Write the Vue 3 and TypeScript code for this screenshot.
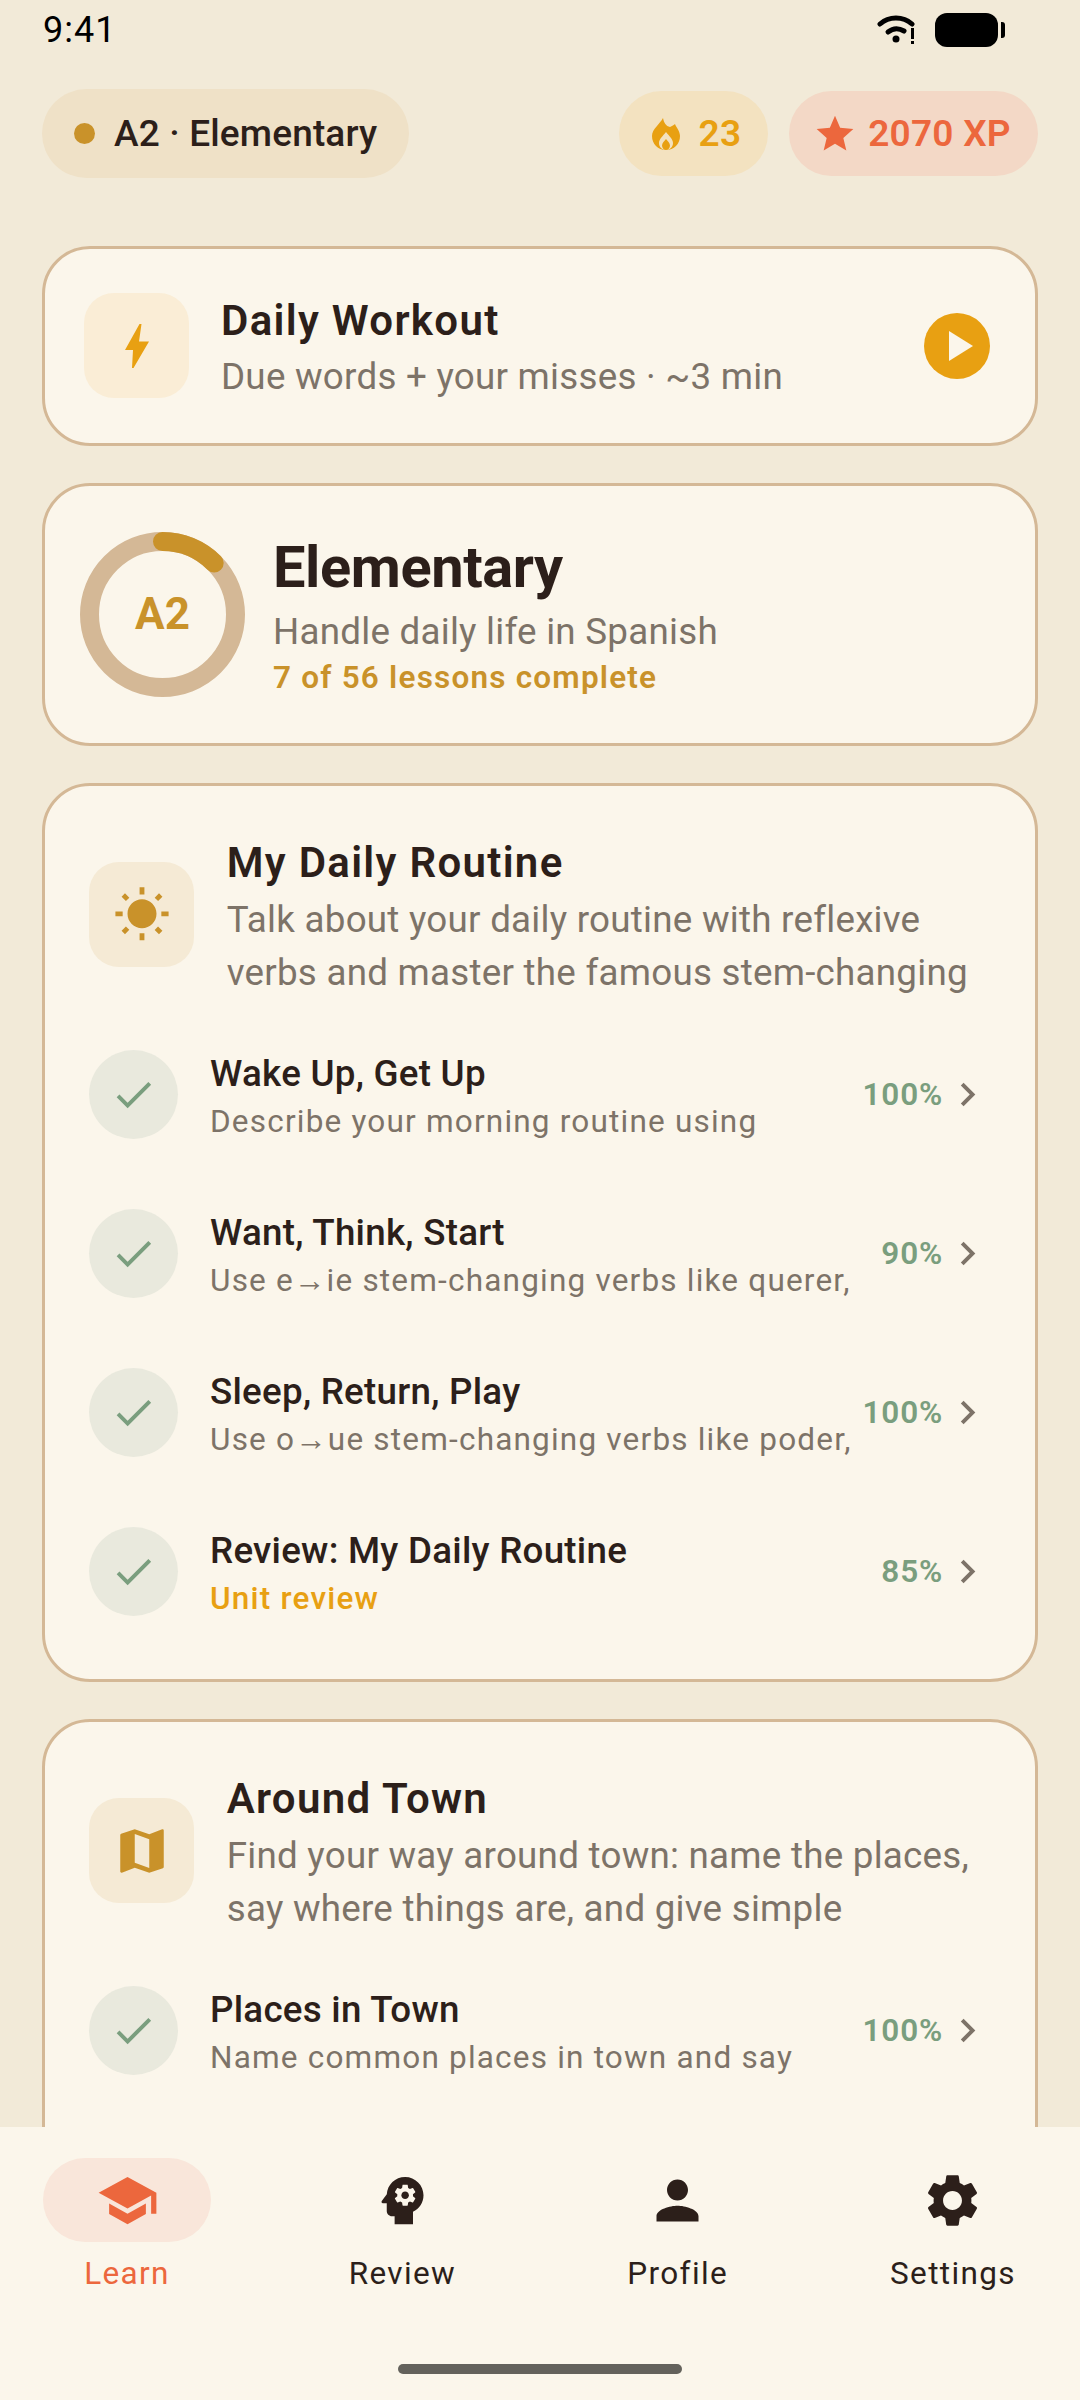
<script setup lang="ts">
interface Lesson {
  title: string
  sub: string
  pct: string
  review?: boolean
}

interface Unit {
  title: string
  desc: string[]
  icon: string
  lessons: Lesson[]
}

const sunPath =
  'M6.76 4.84l-1.8-1.79-1.41 1.41 1.79 1.79 1.42-1.41zM4 10.5H1v2h3v-2zm9-9.95h-2V3.5h2V.55zm7.45 3.91l-1.41-1.41-1.79 1.79 1.41 1.41 1.79-1.79zm-3.21 13.7l1.79 1.8 1.41-1.41-1.8-1.79-1.4 1.4zM20 10.5v2h3v-2h-3zm-8-5c-3.31 0-6 2.69-6 6s2.69 6 6 6 6-2.69 6-6-2.69-6-6-6zm-1 16.95h2V19.5h-2v2.95zm-7.45-3.91l1.41 1.41 1.79-1.8-1.41-1.41-1.79 1.8z'
const mapPath =
  'M20.5 3l-.16.03L15 5.1 9 3 3.36 4.9c-.21.07-.36.25-.36.48V20.5c0 .28.22.5.5.5l.16-.03L9 18.9l6 2.1 5.64-1.9c.21-.07.36-.25.36-.48V3.5c0-.28-.22-.5-.5-.5zM15 19l-6-2.11V5l6 2.11V19z'

const units: Unit[] = [
  {
    title: 'My Daily Routine',
    desc: ['Talk about your daily routine with reflexive', 'verbs and master the famous stem-changing'],
    icon: sunPath,
    lessons: [
      { title: 'Wake Up, Get Up', sub: 'Describe your morning routine using', pct: '100%' },
      { title: 'Want, Think, Start', sub: 'Use e→ie stem-changing verbs like querer,', pct: '90%' },
      { title: 'Sleep, Return, Play', sub: 'Use o→ue stem-changing verbs like poder,', pct: '100%' },
      { title: 'Review: My Daily Routine', sub: 'Unit review', pct: '85%', review: true },
    ],
  },
  {
    title: 'Around Town',
    desc: ['Find your way around town: name the places,', 'say where things are, and give simple'],
    icon: mapPath,
    lessons: [{ title: 'Places in Town', sub: 'Name common places in town and say', pct: '100%' }],
  },
]

const navItems = [
  {
    label: 'Learn',
    active: true,
    paths: ['M5 13.18v4L12 21l7-3.82v-4L12 17l-7-3.82zM12 3L1 9l11 6 9-4.91V17h2V9L12 3z'],
  },
  {
    label: 'Review',
    active: false,
    paths: [
      'M13 8.57c-.79 0-1.43.64-1.43 1.43s.64 1.43 1.43 1.43 1.43-.64 1.43-1.43-.64-1.43-1.43-1.43z',
      'M13 3C9.25 3 6.2 5.94 6.02 9.64L4.1 12.2c-.25.33-.01.8.4.8H6v3c0 1.1.9 2 2 2h1v3h7v-4.68c2.36-1.12 4-3.53 4-6.32 0-3.87-3.13-7-7-7zm3 7c0 .13-.01.26-.03.39l.83.66c.08.06.1.16.05.25l-.8 1.39c-.05.09-.16.12-.24.09l-.99-.4c-.21.16-.43.29-.67.39L14 13.83c-.01.1-.1.17-.2.17h-1.6c-.1 0-.18-.07-.2-.17l-.15-1.06c-.25-.1-.47-.23-.68-.39l-.99.4c-.09.03-.2 0-.25-.09l-.8-1.39c-.05-.08-.03-.19.05-.25l.84-.66c-.01-.13-.02-.26-.02-.39s.02-.27.04-.39l-.85-.66c-.08-.06-.1-.16-.05-.26l.8-1.38c.05-.09.15-.12.24-.09l1 .4c.2-.15.43-.29.67-.39L12 6.17c.02-.1.1-.17.2-.17h1.6c.1 0 .18.07.2.17l.15 1.06c.24.1.46.23.67.39l1-.4c.09-.03.2 0 .24.09l.8 1.38c.05.09.03.2-.05.26l-.85.66c.03.12.04.25.04.39z',
    ],
  },
  {
    label: 'Profile',
    active: false,
    paths: ['M12 12c2.21 0 4-1.79 4-4s-1.79-4-4-4-4 1.79-4 4 1.79 4 4 4zm0 2c-2.67 0-8 1.34-8 4v2h16v-2c0-2.66-5.33-4-8-4z'],
  },
  {
    label: 'Settings',
    active: false,
    paths: [
      'M19.14 12.94c.04-.3.06-.61.06-.94 0-.32-.02-.64-.07-.94l2.03-1.58c.18-.14.23-.41.12-.61l-1.92-3.32c-.12-.22-.37-.29-.59-.22l-2.39.96c-.5-.38-1.03-.7-1.62-.94l-.36-2.54c-.04-.24-.24-.41-.48-.41h-3.84c-.24 0-.43.17-.47.41l-.36 2.54c-.59.24-1.13.57-1.62.94l-2.39-.96c-.22-.08-.47 0-.59.22L2.74 8.87c-.12.21-.08.47.12.61l2.03 1.58c-.05.3-.09.63-.09.94s.02.64.07.94l-2.03 1.58c-.18.14-.23.41-.12.61l1.92 3.32c.12.22.37.29.59.22l2.39-.96c.5.38 1.03.7 1.62.94l.36 2.54c.05.24.24.41.48.41h3.84c.24 0 .44-.17.47-.41l.36-2.54c.59-.24 1.13-.56 1.62-.94l2.39.96c.22.08.47 0 .59-.22l1.92-3.32c.12-.22.07-.47-.12-.61l-2.01-1.58zM12 15.6c-1.98 0-3.6-1.62-3.6-3.6s1.62-3.6 3.6-3.6 3.6 1.62 3.6 3.6-1.62 3.6-3.6 3.6z',
    ],
  },
]

// ring is r=73 in a 165 box, 7 of 56 lessons done
const ringLen = 2 * Math.PI * 73
const ringDash = `${ringLen * 0.125} ${ringLen}`
</script>

<template>
  <div class="screen">
    <div class="status">
      <span class="clock">9:41</span>
      <svg class="wifi" width="40" height="32" viewBox="0 0 40 32">
        <path d="M3 10C12 2 26 2 35 10" fill="none" stroke="#000" stroke-width="5" stroke-linecap="round" />
        <path d="M11 18C16 14 22 14 27 17" fill="none" stroke="#000" stroke-width="5" stroke-linecap="round" />
        <circle cx="19" cy="25" r="3.5" fill="#000" />
        <rect x="34" y="14" width="3" height="11" fill="#000" />
        <rect x="34" y="27" width="3" height="3" fill="#000" />
      </svg>
      <div class="battery"></div>
      <div class="battery-nub"></div>
    </div>

    <div class="content">
      <div class="top">
        <div class="level-pill">
          <span class="dot"></span>
          <span>A2 · Elementary</span>
        </div>
        <div class="spacer"></div>
        <div class="chip chip-streak">
          <svg width="28" height="32" viewBox="0 0 28 32">
            <path d="M11 0C12 5 14 8 18 9C20 8 22 7 23 6C24 9 28 13 28 18C28 26 22 32 14 32C6 32 0 26 0 18C0 11 8 6 11 0Z" fill="#E8A012" />
            <path d="M14 14C17 18 21 21 21 25C21 29 18 32 14 32C10 32 7 29 7 25C7 21 11 18 14 14Z" fill="#F3E2C0" />
            <path d="M14 21C15.5 23 18 25 18 27.5C18 30 16 32 14 32C12 32 10 30 10 27.5C10 25 12.5 23 14 21Z" fill="#E8A012" />
          </svg>
          <span>23</span>
        </div>
        <div class="chip chip-xp">
          <svg width="44" height="44" viewBox="0 0 24 24" fill="#EC673D">
            <path d="M12 17.27L18.18 21l-1.64-6.81L22 9.24l-7.19-.61L12 2 9.19 8.63 2 9.24l5.46 4.95L5.82 21z" />
          </svg>
          <span>2070 XP</span>
        </div>
      </div>

      <div class="card workout">
        <div class="workout-icon">
          <svg width="24" height="44" viewBox="0 0 24 44" fill="#E8A012">
            <path d="M14.5 0H16.5L14 17.5H24L8.5 44H7L8 26H0Z" />
          </svg>
        </div>
        <div class="workout-text">
          <div class="workout-title">Daily Workout</div>
          <div class="workout-sub">Due words + your misses · ~3 min</div>
        </div>
        <svg class="play" width="66" height="66" viewBox="0 0 66 66">
          <circle cx="33" cy="33" r="33" fill="#E8A012" />
          <path d="M25 18V48L49 33Z" fill="#FBF6EB" />
        </svg>
      </div>

      <div class="card level">
        <svg class="ring" width="165" height="165" viewBox="0 0 165 165">
          <circle cx="82.5" cy="82.5" r="73" fill="none" stroke="#D4B896" stroke-width="19" />
          <circle
            cx="82.5"
            cy="82.5"
            r="73"
            fill="none"
            stroke="#C9922A"
            stroke-width="19"
            stroke-linecap="round"
            :stroke-dasharray="ringDash"
            transform="rotate(-90 82.5 82.5)"
          />
          <text x="82.5" y="97" text-anchor="middle" class="ring-text">A2</text>
        </svg>
        <div class="level-text">
          <div class="level-title">Elementary</div>
          <div class="level-sub">Handle daily life in Spanish</div>
          <div class="level-count">7 of 56 lessons complete</div>
        </div>
      </div>

      <div v-for="unit in units" :key="unit.title" class="card unit">
        <div class="unit-head">
          <div class="unit-icon">
            <svg width="58" height="58" viewBox="0 0 24 24" fill="#C9922A"><path :d="unit.icon" /></svg>
          </div>
          <div class="unit-text">
            <div class="unit-title">{{ unit.title }}</div>
            <div v-for="line in unit.desc" :key="line" class="unit-desc">{{ line }}</div>
          </div>
        </div>
        <div v-for="lesson in unit.lessons" :key="lesson.title" class="row">
          <div class="check">
            <svg width="47" height="47" viewBox="0 0 24 24" fill="#7A9E7E">
              <path d="M9 16.17L4.83 12l-1.42 1.41L9 19 21 7l-1.41-1.41z" />
            </svg>
          </div>
          <div class="row-text">
            <div class="row-title">{{ lesson.title }}</div>
            <div class="row-sub" :class="{ 'row-review': lesson.review }">{{ lesson.sub }}</div>
          </div>
          <span class="pct">{{ lesson.pct }}</span>
          <svg class="chev" width="47" height="47" viewBox="0 0 24 24" fill="#7D7368">
            <path d="M10 6L8.59 7.41 13.17 12l-4.58 4.59L10 18l6-6z" />
          </svg>
        </div>
      </div>
    </div>

    <div class="nav">
      <div class="nav-row">
        <div v-for="item in navItems" :key="item.label" class="nav-item" :class="{ active: item.active }">
          <div class="nav-pill">
            <svg width="63" height="63" viewBox="0 0 24 24" :fill="item.active ? '#EC673D' : '#2C1F1A'">
              <path v-for="p in item.paths" :key="p" :d="p" />
            </svg>
          </div>
          <span class="nav-label">{{ item.label }}</span>
        </div>
      </div>
      <div class="home-bar"></div>
    </div>
  </div>
</template>

<style scoped>
.screen {
  width: 1080px;
  height: 2400px;
  background: #f2ead8;
  display: flex;
  flex-direction: column;
  overflow: hidden;
  font-family: Roboto, 'Noto Sans', sans-serif;
  color: #2c1f1a;
}

.status {
  height: 60px;
  flex: none;
  display: flex;
  align-items: center;
  padding: 0 75px 0 43px;
}

.clock {
  font-size: 36px;
  letter-spacing: 1px;
  color: #000;
  margin-right: auto;
}

.wifi {
  margin-right: 18px;
}

.battery {
  width: 63px;
  height: 34px;
  background: #000;
  border-radius: 12px;
}

.battery-nub {
  width: 4px;
  height: 16px;
  background: #000;
  border-radius: 0 3px 3px 0;
  margin-left: 3px;
}

.content {
  flex: 1;
  min-height: 0;
  overflow: hidden;
  padding: 29px 42px 0;
  display: flex;
  flex-direction: column;
  gap: 37.6px;
}

.top {
  display: flex;
  align-items: center;
  margin-bottom: 30.4px;
  flex: none;
}

.spacer {
  flex: 1;
}

.level-pill {
  height: 89px;
  padding: 0 32px;
  border-radius: 45px;
  background: #efe1c7;
  display: flex;
  align-items: center;
  gap: 19px;
  font-size: 37px;
  font-weight: 500;
  letter-spacing: 0.15px;
}

.dot {
  width: 21px;
  height: 21px;
  border-radius: 50%;
  background: #c9922a;
}

.chip {
  height: 85px;
  border-radius: 43px;
  display: flex;
  align-items: center;
  font-size: 37px;
  font-weight: 600;
  letter-spacing: 0.25px;
}

.chip-streak {
  width: 149px;
  box-sizing: border-box;
  padding-left: 6px;
  justify-content: center;
  gap: 19px;
  background: #f3e2c0;
  color: #e8a012;
  margin-right: 21px;
}

.chip-xp {
  width: 249px;
  box-sizing: border-box;
  padding-right: 3px;
  justify-content: center;
  gap: 11px;
  background: #f3d8c6;
  color: #ec673d;
}

.card {
  flex: none;
  background: #fbf6eb;
  border: 3px solid #d4b896;
  border-radius: 48px;
}

.workout {
  display: flex;
  align-items: center;
  padding: 44.35px 45px 44.35px 39px;
}

.workout-icon {
  width: 105px;
  height: 105px;
  flex: none;
  border-radius: 30px;
  background: #faedd6;
  display: flex;
  align-items: center;
  justify-content: center;
}

.workout-text {
  flex: 1;
  height: 105px;
  box-sizing: border-box;
  margin-left: 32px;
  padding-top: 3px;
}

.workout-title {
  font-size: 42px;
  font-weight: 600;
  letter-spacing: 1.3px;
  line-height: 50px;
}

.workout-sub {
  font-size: 36.75px;
  color: #7d7368;
  letter-spacing: 0.25px;
  line-height: 46px;
  margin-top: 7.5px;
}

.play {
  flex: none;
}

.level {
  display: flex;
  align-items: center;
  padding: 45.7px 35px;
}

.ring {
  flex: none;
}

.ring-text {
  font-size: 44px;
  font-weight: 700;
  fill: #c9922a;
}

.level-text {
  margin-left: 28px;
}

.level-title {
  font-size: 57.75px;
  font-weight: 700;
  line-height: 70px;
  letter-spacing: -0.4px;
}

.level-sub {
  font-size: 36.75px;
  color: #7d7368;
  letter-spacing: 0.25px;
  line-height: 48px;
  margin-top: 6px;
}

.level-count {
  font-size: 31.5px;
  font-weight: 600;
  color: #c9922a;
  letter-spacing: 1.2px;
  line-height: 42px;
  margin-top: 1px;
  margin-bottom: -2px;
}

.unit {
  padding: 49px 56px 27.5px 44px;
}

/* the last card runs on under the nav bar */
.unit:last-child {
  padding-bottom: 200px;
}

.unit-head {
  display: flex;
  align-items: center;
  margin-bottom: 16px;
}

.unit-icon {
  width: 105px;
  height: 105px;
  flex: none;
  border-radius: 30px;
  background: #f5ead5;
  display: flex;
  align-items: center;
  justify-content: center;
  margin-bottom: 5px;
}

.unit-text {
  margin-left: 32.7px;
}

.unit-title {
  font-size: 42px;
  font-weight: 600;
  letter-spacing: 1.3px;
  line-height: 55px;
  margin-bottom: 3px;
}

.unit-desc {
  font-size: 36.75px;
  color: #7d7368;
  letter-spacing: 0.25px;
  line-height: 53px;
  white-space: nowrap;
}

.row {
  height: 159px;
  display: flex;
  align-items: center;
}

.check {
  width: 89px;
  height: 89px;
  flex: none;
  border-radius: 50%;
  background: #e9e9dd;
  display: flex;
  align-items: center;
  justify-content: center;
}

.row-text {
  flex: 1;
  min-width: 0;
  margin-left: 32px;
  padding-top: 3px;
}

.row-title {
  font-size: 36.75px;
  font-weight: 500;
  letter-spacing: 0.25px;
  line-height: 48px;
}

.row-sub {
  font-size: 31.5px;
  font-weight: 450;
  color: #7d7368;
  letter-spacing: 1.2px;
  line-height: 42px;
  margin-top: 3px;
  white-space: nowrap;
  overflow: hidden;
}

.row-review {
  color: #e8a012;
  font-weight: 500;
}

.pct {
  font-size: 31.5px;
  font-weight: 600;
  color: #7a9e7e;
  letter-spacing: 0.8px;
  margin-left: 4px;
}

.chev {
  flex: none;
  margin-left: 1px;
  margin-right: -12px;
}

.nav {
  height: 273px;
  box-sizing: border-box;
  flex: none;
  background: #fbf6eb;
  position: relative;
  z-index: 1;
  padding: 31px 43px 0;
  display: flex;
  flex-direction: column;
}

.nav-row {
  display: flex;
  justify-content: space-between;
}

.nav-item {
  width: 168px;
  display: flex;
  flex-direction: column;
  align-items: center;
  gap: 11px;
}

.nav-pill {
  width: 168px;
  height: 84px;
  border-radius: 42px;
  display: flex;
  align-items: center;
  justify-content: center;
}

.active .nav-pill {
  background: #f9e6da;
}

.nav-label {
  font-size: 31.5px;
  font-weight: 450;
  letter-spacing: 1.35px;
  line-height: 42px;
  white-space: nowrap;
}

.active .nav-label {
  color: #ec673d;
}

.home-bar {
  width: 284px;
  height: 10px;
  border-radius: 5px;
  background: #64625c;
  align-self: center;
  margin-top: auto;
  margin-bottom: 26px;
}
</style>

<style>
html,
body {
  background: #f2ead8;
}
</style>
